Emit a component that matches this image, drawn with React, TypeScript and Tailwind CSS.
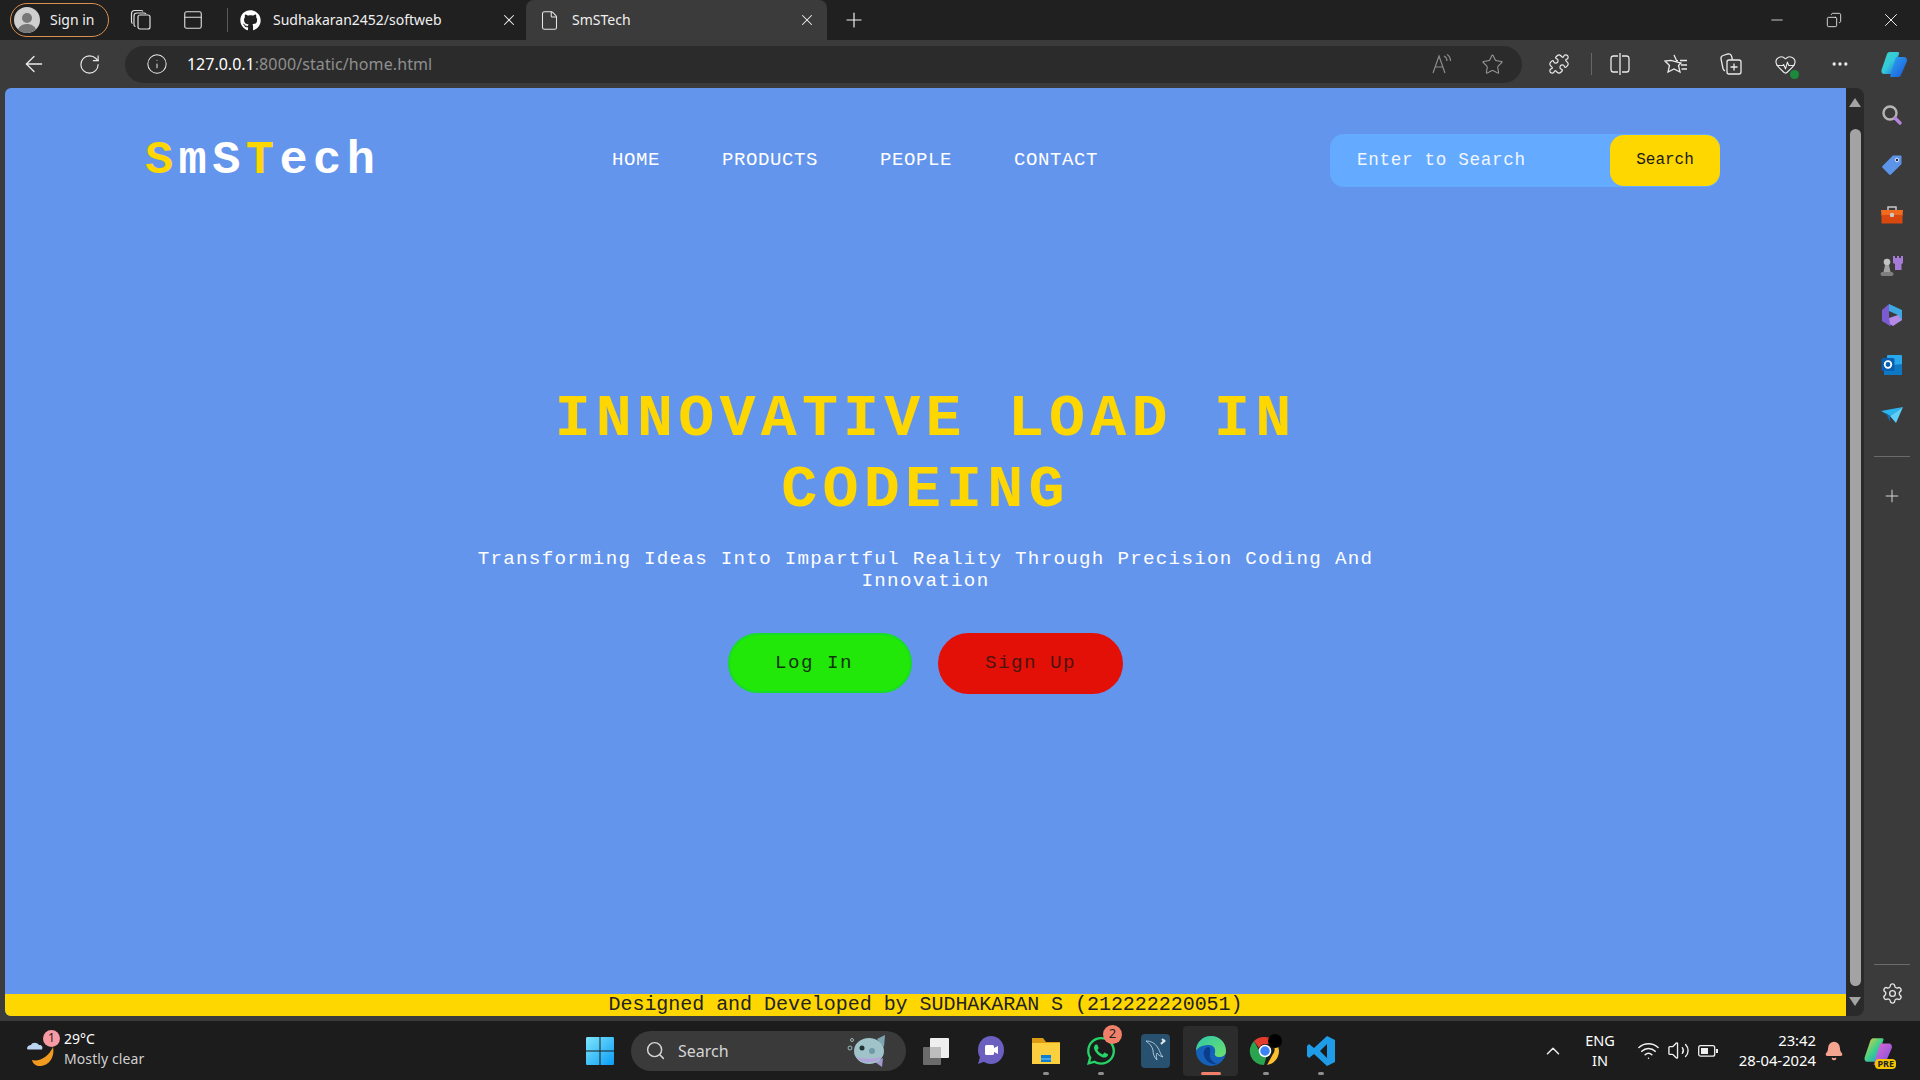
import { FC, ReactNode } from "react";
import {
  ArrowLeft,
  ChevronUp,
  Copy,
  File,
  Info,
  Minus,
  MoreHorizontal,
  Plus,
  PanelTop,
  Puzzle,
  RotateCw,
  Search,
  Settings,
  Star,
  Volume2,
  Wifi,
  X,
  Bell,
  HeartPulse,
} from "lucide-react";
import { FaGithub, FaWhatsapp } from "react-icons/fa";

const mono = "font-['Liberation_Mono','Courier_New',monospace]";

const CopilotIcon: FC<{ size?: number; tray?: boolean }> = ({ size = 28, tray }) => {
  const a = tray ? "cpTrayA" : "cpA";
  const b = tray ? "cpTrayB" : "cpB";
  return (
    <svg width={size} height={size} viewBox="0 0 28 28">
      <defs>
        <linearGradient id={a} x1="0" y1="0" x2="1" y2="1">
          <stop offset="0" stopColor={tray ? "#f2d03a" : "#38d6c8"} />
          <stop offset="0.5" stopColor={tray ? "#3fd08a" : "#35c9d8"} />
          <stop offset="1" stopColor={tray ? "#1b8fe0" : "#1b5fe0"} />
        </linearGradient>
        <linearGradient id={b} x1="0" y1="0" x2="1" y2="1">
          <stop offset="0" stopColor={tray ? "#e36ad0" : "#2aa6f2"} />
          <stop offset="1" stopColor={tray ? "#7a4fe0" : "#1d57d8"} />
        </linearGradient>
      </defs>
      <path d="M10 2h8c1 0 1.500 1 1 2l-7 20H4c-2 0-3-2-2.500-4L7 4c.5-1.500 2-2 3-2z" fill={`url(#${a})`} />
      <path d="M16 7h8c2 0 3.500 2 3 4l-6 14c-.5 1.500-2 2-3 2h-8z" fill={`url(#${b})`} />
    </svg>
  );
};

const SideIcon: FC<{ children: ReactNode }> = ({ children }) => (
  <div className="flex h-[50px] items-center justify-center">{children}</div>
);

const Sidebar = () => (
  <div className="flex w-[56px] flex-col bg-[#3b3b3b] pt-[2px]">
    <SideIcon>
      <svg width="22" height="22" viewBox="0 0 22 22" fill="none">
        <circle cx="9" cy="9" r="6.500" stroke="#b5b5b5" strokeWidth="2.400" />
        <path d="M14 14l5 5" stroke="#b583dc" strokeWidth="3.400" strokeLinecap="round" />
      </svg>
    </SideIcon>
    <SideIcon>
      <svg width="22" height="22" viewBox="0 0 22 22">
        <path d="M12 1.500h7.500c.5 0 1 .5 1 1V10L10 20.500c-.5.500-1.300.500-1.800 0L1.500 13.800c-.5-.5-.5-1.300 0-1.800z" fill="#5c94ea" />
        <circle cx="16" cy="6" r="1.800" fill="#1d2a44" stroke="#dfe8f8" />
      </svg>
    </SideIcon>
    <SideIcon>
      <svg width="24" height="20" viewBox="0 0 24 20">
        <path d="M8 5V2h8v3" fill="none" stroke="#c9c9c9" strokeWidth="1.500" />
        <path d="M1 5h22l-.5 6H1.500z" fill="#f26a1e" />
        <path d="M1.500 10h21v8.500h-21z" fill="#d9480f" />
        <rect x="10" y="8" width="4" height="4" rx="1" fill="#c9c9c9" />
      </svg>
    </SideIcon>
    <SideIcon>
      <svg width="24" height="24" viewBox="0 0 24 24">
        <path d="M13 3h2v2h2V3h2v2h2V3h2v7l-1.500 1v6H15v-6l-2-1z" fill="#a67bd6" />
        <circle cx="7" cy="9" r="3.300" fill="#c2c2c2" />
        <path d="M5 12h4l1.500 7h-7z" fill="#a3a3a3" />
        <rect x="0.500" y="19" width="13" height="4" rx="2" fill="#7f7f7f" />
      </svg>
    </SideIcon>
    <SideIcon>
      <svg width="22" height="24" viewBox="0 0 22 24">
        <path d="M8 1l13 6v10l-6 3 2-8-9-4z" fill="#3fa8e0" />
        <path d="M1 7l7-6v14l6 3-5 5-8-5z" fill="#7a5bd0" />
        <path d="M8 15l9-3 4 5-9 6-3-2z" fill="#b48ae6" />
      </svg>
    </SideIcon>
    <SideIcon>
      <svg width="22" height="22" viewBox="0 0 22 22">
        <rect x="6" y="1" width="15" height="19" rx="1" fill="#28a8ea" />
        <path d="M3 12l18-2v11H3z" fill="#0f78c4" />
        <rect x="0.500" y="4" width="13" height="13" rx="1.500" fill="#0a5eb0" />
        <circle cx="7" cy="10.500" r="3.300" fill="none" stroke="#fff" strokeWidth="1.800" />
      </svg>
    </SideIcon>
    <SideIcon>
      <svg width="22" height="18" viewBox="0 0 22 18">
        <path d="M0 5l22-4-13 9z" fill="#2bb5f0" />
        <path d="M22 1L9 10l6 7z" fill="#5cd0fb" />
        <path d="M5 7l4 3v6z" fill="#0d6cb6" />
      </svg>
    </SideIcon>
    <div className="mx-[10px] mt-[16px] h-px bg-[#6b6b6b]" />
    <div className="flex h-[78px] items-center justify-center text-[#d5d5d5]">
      <Plus size={20} strokeWidth={1.200} />
    </div>
    <div className="flex-1" />
    <div className="mx-[10px] h-px bg-[#6b6b6b]" />
    <div className="flex h-[51px] items-center justify-center pt-[5px] text-[#e5e5e5]">
      <Settings size={23} strokeWidth={1.400} />
    </div>
  </div>
);

const Scrollbar = () => (
  <div className="flex w-[18px] flex-col items-center rounded-r-lg bg-[#2a2a2a] pb-[4px]">
    <div className="mt-[10px] h-0 w-0 border-x-[6px] border-b-[9px] border-x-transparent border-b-[#a3a3a3]" />
    <div className="mt-[22px] w-[11px] flex-1 rounded-full bg-[#a3a3a3]" />
    <div className="mt-[11px] mb-[6px] h-0 w-0 border-x-[6px] border-t-[9px] border-x-transparent border-t-[#a3a3a3]" />
  </div>
);

const TabBar = () => (
  <div className="flex h-[40px] items-center bg-[#202020] font-['Noto_Sans',sans-serif] text-[14px] text-[#f0f0f0]">
    <div className="ml-[10px] flex h-[34px] w-[99px] items-center gap-[10px] rounded-full border border-[#d98f4e] pl-[3px]">
      <div className="flex h-[26px] w-[26px] flex-col items-center justify-end overflow-hidden rounded-full bg-[#cfcfcf]">
        <div className="h-[10px] w-[10px] rounded-full bg-[#777]" />
        <div className="mt-[1px] h-[9px] w-[20px] rounded-t-full bg-[#777]" />
      </div>
      <span className="-mt-[2px]">Sign in</span>
    </div>
    <div className="ml-[6px] flex w-[52px] justify-center text-[#e0e0e0]">
      <svg width="22" height="22" viewBox="0 0 22 22" fill="none" stroke="currentColor" strokeWidth="1.200">
        <rect x="8" y="6" width="12" height="14" rx="2" />
        <path d="M5.500 17.500c-1-.3-1.500-1-1.500-2V7c0-2 1-3 3-3h7c1 0 1.500.3 2 1" />
        <path d="M2.500 14.500c-.7-.4-1-1-1-2V5c0-2 1-3.500 3.500-3.500h6c1 0 1.500.3 2 .8" />
      </svg>
    </div>
    <div className="flex w-[52px] justify-center text-[#e0e0e0]">
      <PanelTop size={22} strokeWidth={1.200} />
    </div>
    <div className="ml-[8px] h-[24px] w-px bg-[#5a5a5a]" />
    <div className="flex w-[298px] items-center pl-[12px]">
      <FaGithub size={21} color="#fff" />
      <span className="-mt-[2px] ml-[12px] flex-1 truncate">Sudhakaran2452/softweb</span>
      <X size={18} strokeWidth={1.400} className="mr-[8px]" />
    </div>
    <div className="flex h-[40px] w-[301px] items-center rounded-t-lg bg-[#3b3b3b] pl-[13px]">
      <File size={21} strokeWidth={1.200} className="text-[#e5e5e5]" />
      <span className="-mt-[2px] ml-[12px] flex-1">SmSTech</span>
      <X size={18} strokeWidth={1.400} className="mr-[11px]" />
    </div>
    <Plus size={24} strokeWidth={1.200} className="ml-[15px]" />
    <div className="flex-1" />
    <div className="flex items-center text-white">
      <div className="flex w-[57px] justify-center"><Minus size={18} strokeWidth={1} /></div>
      <div className="flex w-[57px] justify-center"><Copy size={16} strokeWidth={1.200} className="-scale-x-100" /></div>
      <div className="flex w-[58px] justify-center"><X size={22} strokeWidth={1} /></div>
    </div>
  </div>
);

const ToolBtn: FC<{ children: ReactNode }> = ({ children }) => (
  <div className="flex w-[55px] items-center justify-center text-[#eaeaea]">{children}</div>
);

const Toolbar = () => (
  <div className="flex h-[48px] items-center bg-[#3b3b3b]">
    <div className="flex w-[34px] justify-end text-[#eaeaea]">
      <ArrowLeft size={26} strokeWidth={1.200} className="translate-x-[13px]" />
    </div>
    <div className="flex w-[55px] justify-end text-[#eaeaea]">
      <RotateCw size={23} strokeWidth={1.200} className="translate-x-[12px]" />
    </div>
    <div className="ml-[36px] flex h-[37px] w-[1398px] items-center rounded-full bg-[#2b2b2b] pl-[21px] font-['Noto_Sans',sans-serif] text-[16px]">
      <Info size={22} strokeWidth={1.100} className="text-[#eaeaea]" />
      <span className="ml-[19px] text-white">127.0.0.1</span>
      <span className="tracking-[0.1px] text-[#8f8f8f]">:8000/static/home.html</span>
      <div className="flex-1" />
      <svg width="22" height="22" viewBox="0 0 22 22" fill="none" stroke="#8c8c8c" strokeWidth="1.200" className="mr-[28px]">
        <path d="M2 20L8 3l6 17M4.500 14h7" />
        <path d="M13 3c2 1 3 3 3 5M16 1.500c2.500 1.500 3.500 4 3.500 6.500" />
      </svg>
      <Star size={23} strokeWidth={1.100} className="mr-[18px] text-[#9a9a9a]" />
    </div>
    <div className="ml-[9px] flex w-[55px] justify-center text-[#eaeaea]">
      <Puzzle size={22} strokeWidth={1.300} />
    </div>
    <div className="ml-[5px] h-[22px] w-px bg-[#666]" />
    <ToolBtn>
      <svg width="22" height="24" viewBox="0 0 22 24" fill="none" stroke="currentColor" strokeWidth="1.300">
        <path d="M9 4H4a2.500 2.500 0 0 0-2 2.500v11A2.500 2.500 0 0 0 4 20h5M13 4h5a2.500 2.500 0 0 1 2 2.500v11a2.500 2.500 0 0 1-2 2.500h-5M11 1v22" />
      </svg>
    </ToolBtn>
    <ToolBtn>
      <svg width="24" height="24" viewBox="0 0 24 24" fill="none" stroke="currentColor" strokeWidth="1.300" className="translate-x-[1px]">
        <path d="M10 3l2.500 5.500 1.500.2M17 11l-2.500 2.500L16 20l-6-3-6 3 1.500-6.500L1 9l6-.7z" />
        <path d="M16 8.500h7M17 13h6M17.500 17h5.500" />
      </svg>
    </ToolBtn>
    <ToolBtn>
      <svg width="24" height="24" viewBox="0 0 24 24" fill="none" stroke="currentColor" strokeWidth="1.300" className="translate-x-[1px]">
        <rect x="8" y="8" width="14" height="14" rx="2" />
        <path d="M15 11.500v7M11.500 15h7" />
        <path d="M6 19c-1-.5-1.500-1-2-2.500L2 7c-.3-2 .5-3 2-3.500l5-1.500c2-.5 3 .2 3.500 2l1 4" />
      </svg>
    </ToolBtn>
    <ToolBtn>
      <div className="relative translate-x-[1px]">
        <HeartPulse size={23} strokeWidth={1.200} />
        <div className="absolute -right-[2px] -bottom-[3px] h-[9px] w-[9px] rounded-full bg-[#1b8a3a]" />
      </div>
    </ToolBtn>
    <ToolBtn><MoreHorizontal size={20} /></ToolBtn>
    <div className="flex w-[53px] justify-center"><CopilotIcon /></div>
  </div>
);

const Page = () => (
  <div className="flex flex-1 flex-col overflow-hidden rounded-l-md bg-[#6495ed]">
    <header className="flex h-[144px] items-center pr-[126px] pl-[140px]">
      <div className={`${mono} mt-[3px] w-[467px] text-[47px] font-bold tracking-[5.400px] text-white`}>
        <span className="text-[#ffd700]">S</span>mS<span className="text-[#ffd700]">T</span>ech
      </div>
      <nav className={`${mono} flex flex-1 text-[19px] tracking-[0.6px] text-white`}>
        <span className="w-[110px]">HOME</span>
        <span className="w-[158px]">PRODUCTS</span>
        <span className="w-[134px]">PEOPLE</span>
        <span>CONTACT</span>
      </nav>
      <div className="flex h-[53px] w-[390px] items-center rounded-[14px] bg-[#64aaff] pl-[27px]">
        <span className={`${mono} flex-1 text-[17.600px] tracking-[0.7px] text-[#f1f6ff]`}>Enter to Search</span>
        <button className={`${mono} h-[51px] w-[110px] rounded-[14px] bg-[#ffd700] text-[16px] text-[#1a1a1a]`}>Search</button>
      </div>
    </header>
    <main className="flex flex-1 flex-col items-center pt-[152px]">
      <h1 className={`${mono} w-[900px] text-center text-[60px] leading-[71px] font-bold tracking-[5.200px] text-[#ffd700]`}>
        INNOVATIVE LOAD IN CODEING
      </h1>
      <p className={`${mono} mt-[22px] w-[900px] text-center text-[19.200px] leading-[22px] tracking-[1.280px] text-white`}>
        Transforming Ideas Into Impartful Reality Through Precision Coding And Innovation
      </p>
      <div className="mt-[41px] flex gap-[26px]">
        <button className={`${mono} h-[60px] w-[184px] rounded-full border-2 border-[#16dc28] bg-[#22e80a] pr-[12px] text-[19.200px] tracking-[1.500px] text-[#10350c]`}>
          Log In
        </button>
        <button className={`${mono} h-[61px] w-[185px] rounded-full bg-[#e31007] text-[19.200px] tracking-[1.500px] text-[#4a1410]`}>
          Sign Up
        </button>
      </div>
    </main>
    <footer className={`${mono} h-[22px] bg-[#ffd700] text-center text-[20px] leading-[22px] tracking-[-0.040px] text-[#222]`}>
      Designed and Developed by SUDHAKARAN S (212222220051)
    </footer>
  </div>
);

const WinLogo = () => (
  <svg width="30" height="30" viewBox="0 0 30 30">
    <defs>
      <linearGradient id="win" x1="0" y1="0" x2="1" y2="1">
        <stop offset="0" stopColor="#7fe6fb" />
        <stop offset="1" stopColor="#0a9cf5" />
      </linearGradient>
    </defs>
    <path d="M1 2.500C1 1.500 1.500 1 2.500 1H14.500V14.500H1zM15.500 1H27.500c1 0 1.500.5 1.500 1.500V14.500H15.500zM1 15.500H14.500V29H2.500C1.500 29 1 28.500 1 27.500zM15.500 15.500H29V27.500c0 1-.5 1.500-1.500 1.500H15.500z" fill="url(#win)" />
  </svg>
);

const Fish = () => (
  <svg width="44" height="34" viewBox="0 0 44 34">
    <circle cx="3" cy="14" r="2" fill="none" stroke="#9bb" strokeWidth="1" />
    <circle cx="5" cy="6" r="1.500" fill="none" stroke="#9bb" strokeWidth="1" />
    <path d="M30 5l8-4-1 12z" fill="#7fa5b5" />
    <path d="M28 28l7 5 1-9z" fill="#a39ad0" />
    <ellipse cx="22" cy="17" rx="15" ry="13" fill="#9fc3c9" />
    <path d="M9 23c6 7 20 7 26 0-7 2-19 2-26 0z" fill="#b3a3dc" />
    <circle cx="15" cy="14" r="2.500" fill="#233" />
    <circle cx="25" cy="17" r="3" fill="#6f9aa8" />
  </svg>
);

const TaskIcon: FC<{ children: ReactNode; dot?: boolean; active?: boolean }> = ({ children, dot, active }) => (
  <div className={`relative flex h-[50px] w-[55px] items-center justify-center rounded ${active ? "bg-[#2c2c2c]" : ""}`}>
    {children}
    {dot && <div className="absolute bottom-[1px] h-[3px] w-[6px] rounded-full bg-[#8e8e8e]" />}
    {active && <div className="absolute bottom-[1px] h-[3px] w-[20px] rounded-full bg-[#f0806a]" />}
  </div>
);

const Taskbar = () => (
  <div className="flex h-[59px] items-center bg-[#1c1c1c] font-['Noto_Sans',sans-serif] text-white">
    <div className="relative ml-[26px] h-[36px] w-[30px]">
      <svg width="30" height="36" viewBox="0 0 30 36">
        <path d="M1 16c0-3 2-4 4-4 1-3 6-3 8 0 3 0 4 2 3 4.500H2z" fill="#bcd3f2" />
        <path d="M27 14c2 10-4 19-13 19-4 0-7-2-8-6 8 2 17-4 21-13z" fill="#f29a1f" />
      </svg>
      <div className="absolute -top-[3px] -right-[4px] flex h-[17px] w-[17px] items-center justify-center rounded-full bg-[#f79aa3] text-[12px] text-[#222]">1</div>
    </div>
    <div className="-mt-[3px] ml-[8px] w-[100px] text-[14px] leading-[20px]">
      <div>29°C</div>
      <div className="tracking-[0.1px] text-[#d0d0d0]">Mostly clear</div>
    </div>
    <div className="ml-[420px] flex w-[31px] justify-center"><WinLogo /></div>
    <div className="ml-[16px] flex h-[40px] w-[275px] items-center rounded-full bg-[#3a3a3a] pl-[14px] text-[16px] text-[#d5d5d5]">
      <Search size={21} strokeWidth={1.700} />
      <span className="ml-[12px] flex-1">Search</span>
      <div className="mr-[15px]"><Fish /></div>
    </div>
    <div className="ml-[2px] flex items-center">
      <TaskIcon>
        <svg width="32" height="32" viewBox="0 0 32 32">
          <rect x="3" y="12" width="18" height="18" rx="1" fill="#6b6b6b" />
          <rect x="10" y="3" width="19" height="20" rx="1" fill="#efefef" />
          <rect x="10" y="12" width="11" height="11" fill="#bdbdbd" />
        </svg>
      </TaskIcon>
      <TaskIcon>
        <svg width="30" height="32" viewBox="0 0 30 32">
          <ellipse cx="15" cy="15" rx="13" ry="14" fill="#6b5fc0" />
          <path d="M4 22l-2 7 8-3z" fill="#6b5fc0" />
          <rect x="9" y="10" width="9" height="10" rx="1.500" fill="#fff" />
          <path d="M18 13l4-2v8l-4-2z" fill="#fff" />
        </svg>
      </TaskIcon>
      <TaskIcon dot>
        <svg width="32" height="32" viewBox="0 0 32 32">
          <path d="M2 3h11l3 4h14v4H2z" fill="#dd9b12" />
          <path d="M2 8h28v21H2z" fill="#fbcf3e" />
          <path d="M11 20h10v7H11z" fill="#0f7fd2" />
          <path d="M11 24h10" stroke="#7fd0ff" />
        </svg>
      </TaskIcon>
      <TaskIcon dot>
        <FaWhatsapp size={32} color="#25d366" />
        <div className="absolute top-[-1px] right-[6px] flex h-[19px] w-[19px] items-center justify-center rounded-full bg-[#f0806a] text-[13px] text-[#222]">2</div>
      </TaskIcon>
      <TaskIcon>
        <div className="flex h-[34px] w-[29px] items-center justify-center rounded-sm bg-[#28506f]">
          <svg width="25" height="30" viewBox="0 0 25 30" fill="none" stroke="#a9c6d8" strokeWidth="1">
            <path d="M3 5c5 0 9 2 12 7 2 3 2 6 5 9-3-1-5-2-6-4-1 2-1 4 0 7-3-3-4-6-4-10C9 10 6 7 3 5z" />
            <path d="M18 8l4-4M19 3l3 3" strokeWidth="2" stroke="#dfe8ee" />
          </svg>
        </div>
      </TaskIcon>
      <TaskIcon active>
        <svg width="32" height="34" viewBox="0 0 32 34">
          <defs>
            <linearGradient id="edge" x1="0" y1="0" x2="1" y2="1">
              <stop offset="0" stopColor="#2fc7a8" />
              <stop offset="1" stopColor="#6fe06a" />
            </linearGradient>
          </defs>
          <circle cx="16" cy="17" r="15" fill="#1560b8" />
          <path d="M1 17C1 8 8 2 16 2c9 0 15 7 15 15 0 4-3 6-7 6-3 0-5-2-4-4 1-5-2-8-6-8-6 0-11 2-13 6z" fill="url(#edge)" />
          <path d="M14 13c-4 0-6 4-5 8 1 6 7 10 13 9-5-2-8-6-7-10 0-3 1-5-1-7z" fill="#0c3d8c" />
        </svg>
      </TaskIcon>
      <TaskIcon dot>
        <svg width="34" height="34" viewBox="0 0 34 34">
          <path d="M16 3a14 14 0 0 1 12 7H16a7 7 0 0 0-6 4L5 7a14 14 0 0 1 11-4z" fill="#e33b2e" />
          <path d="M28 10a14 14 0 0 1-10 21l6-11a7 7 0 0 0-1-10z" fill="#fbc02d" />
          <path d="M5 7l6 11a7 7 0 0 0 7 3l-3 10A14 14 0 0 1 5 7z" fill="#2aa44f" />
          <circle cx="16" cy="17" r="5.500" fill="#3b82f6" stroke="#fff" strokeWidth="1.500" />
          <circle cx="26" cy="7" r="7" fill="#000" />
        </svg>
      </TaskIcon>
      <TaskIcon dot>
        <svg width="30" height="32" viewBox="0 0 30 32">
          <path d="M21 1l8 4v22l-8 4-13-12-5 4-2-2V11l2-2 5 4zM21 9l-7 7 7 7z" fill="#1f9ce8" fillRule="evenodd" />
        </svg>
      </TaskIcon>
    </div>
    <div className="flex-1" />
    <ChevronUp size={22} strokeWidth={1.700} className="mr-[13px] text-[#eaeaea]" />
    <div className="-mt-[2px] w-[46px] text-center text-[14.500px] leading-[20px]">
      <div>ENG</div>
      <div>IN</div>
    </div>
    <div className="ml-[10px] flex items-center text-[#f0f0f0]">
      <div className="flex w-[30px] justify-center"><Wifi size={23} strokeWidth={1.600} /></div>
      <div className="flex w-[30px] justify-center"><Volume2 size={23} strokeWidth={1.400} /></div>
      <div className="flex w-[30px] justify-center">
        <svg width="20" height="14" viewBox="0 0 20 14" fill="none">
          <rect x="0.700" y="1.700" width="16" height="10.500" rx="2" stroke="#f0f0f0" strokeWidth="1.300" />
          <rect x="3" y="4" width="7" height="6" fill="#f0f0f0" />
          <rect x="18" y="5" width="2" height="4" fill="#f0f0f0" />
        </svg>
      </div>
    </div>
    <div className="-mt-[2px] ml-[5px] w-[88px] text-right text-[14.800px] leading-[20px]">
      <div>23:42</div>
      <div>28-04-2024</div>
    </div>
    <Bell size={20} fill="#f5a58f" color="#f5a58f" className="ml-[8px]" />
    <div className="relative mr-[27px] ml-[19px]">
      <CopilotIcon size={30} tray />
      <div className="absolute -right-[3px] -bottom-[3px] rounded-sm bg-[#f5c400] px-[2px] text-[9px] leading-[10px] font-bold text-[#222]">PRE</div>
    </div>
  </div>
);

export default function App() {
  return (
    <div className="flex h-[1080px] w-[1920px] flex-col overflow-hidden bg-[#3b3b3b]">
      <TabBar />
      <Toolbar />
      <div className="flex min-h-0 flex-1 pb-[5px] pl-[5px]">
        <Page />
        <Scrollbar />
        <Sidebar />
      </div>
      <Taskbar />
    </div>
  );
}
